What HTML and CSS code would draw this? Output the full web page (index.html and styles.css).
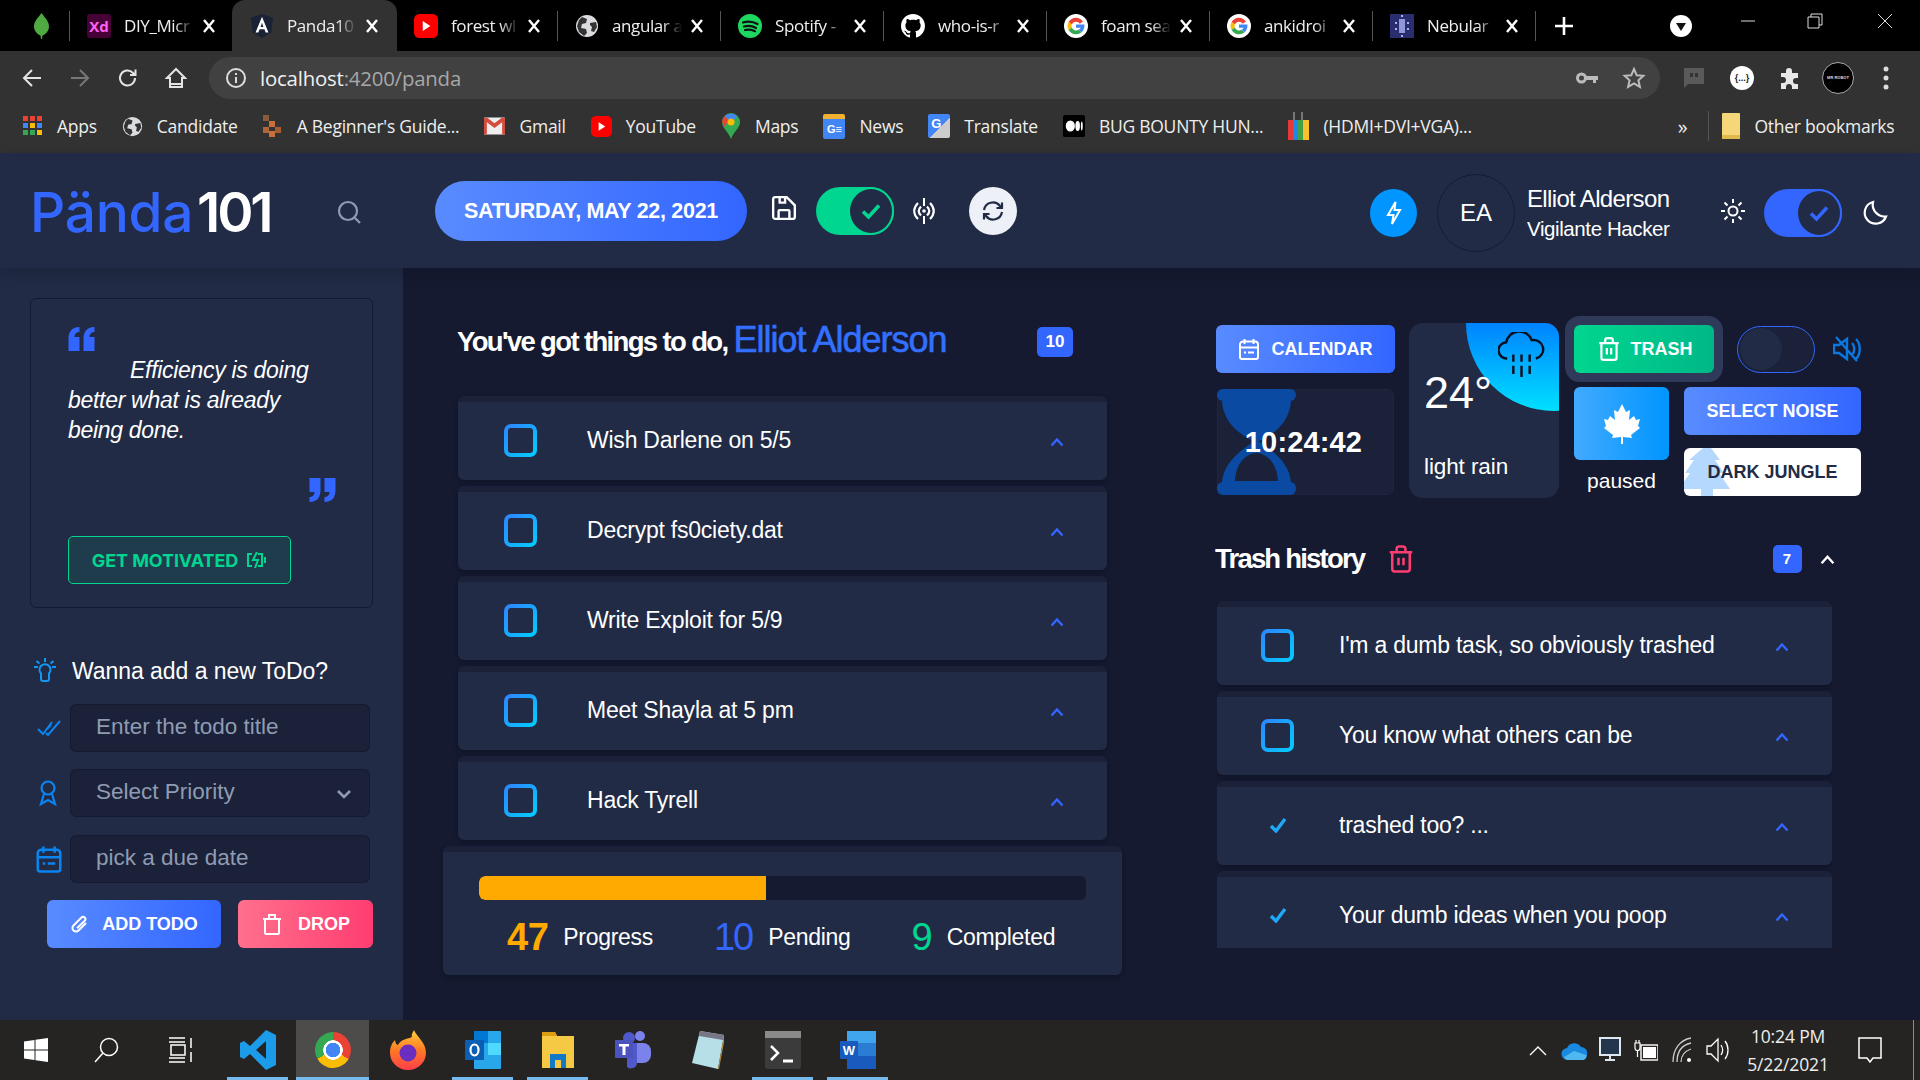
FILE: index.html
```html
<!DOCTYPE html>
<html lang="en">
<head>
<meta charset="utf-8">
<title>Panda101</title>
<link rel="stylesheet" href="styles.css">
</head>
<body>
<svg class="defs" width="0" height="0" aria-hidden="true">
  <symbol id="x" viewBox="0 0 14 14"><path d="M2 1l10 12M12 1L2 13" stroke="#fff" stroke-width="2.4" fill="none"/></symbol>
  <symbol id="g" viewBox="0 0 24 24"><circle cx="12" cy="12" r="12" fill="#fff"/><path d="M19 7.5A8.5 8.5 0 0 0 4.6 8l3.2 2.5A4.6 4.6 0 0 1 15.9 9.8z" fill="#ea4335"/><path d="M4.6 8a8.6 8.6 0 0 0 0 8l3.2-2.5a4.6 4.6 0 0 1 0-3z" fill="#fbbc05"/><path d="M4.6 16a8.5 8.5 0 0 0 13 2.2l-3-2.4a4.6 4.6 0 0 1-6.8-2.3z" fill="#34a853"/><path d="M20.4 10.4H12v3.4h4.7a4 4 0 0 1-2.1 2l3 2.4c2-1.9 3.2-4.7 2.8-7.8z" fill="#4285f4"/></symbol>
  <symbol id="globe" viewBox="0 0 24 24"><circle cx="12" cy="12" r="11" fill="#dadce0"/><path d="M7 3l5 2-1 4-4 1-1 4 5 1 1 4-3 3-5-4-2-6 2-6zM15 9l6-1 1 5-3 5-3-1 1-4-2-2z" fill="#333"/></symbol>
  <symbol id="yt" viewBox="0 0 22 22"><rect width="22" height="22" rx="5" fill="#f00"/><path d="M8 6.5l7 4.5-7 4.5z" fill="#fff"/></symbol>
  <symbol id="chev" viewBox="0 0 14 10"><path d="M1.5 8.5L7 2.5l5.5 6" fill="none" stroke="#3366ff" stroke-width="2.4"/></symbol>
  <symbol id="tick" viewBox="0 0 18 16"><path d="M2 9l5 5L16 2" fill="none" stroke="#1fa8f5" stroke-width="3.4"/></symbol>
  <symbol id="cal" viewBox="0 0 24 24"><path d="M3 7.5A3 3 0 0 1 6 4.5h12a3 3 0 0 1 3 3V20a2 2 0 0 1-2 2H5a2 2 0 0 1-2-2zM3 10.5h18M7.5 2v5M16.500 2v5M7 15.500h2M11 15.500h6" fill="none" stroke="currentColor" stroke-width="2"/></symbol>
  <symbol id="bin" viewBox="0 0 24 24"><path d="M3 6.500h18M5 6.500V20a2 2 0 0 0 2 2h10a2 2 0 0 0 2-2V6.500M8.500 6V4a2 2 0 0 1 2-2h3a2 2 0 0 1 2 2v2M10 11v6M14 11v6" fill="none" stroke="currentColor" stroke-width="2"/></symbol>
  <symbol id="check2" viewBox="0 0 24 24"><path d="M4 12.500l5.500 5.500L20 6.500" fill="none" stroke="currentColor" stroke-width="3.600"/></symbol>
</svg>

<div class="tabstrip">
  <div class="pinned"><svg width="15" height="26" viewBox="0 0 15 26"><path d="M7.500 0C11 5 15 8 15 13.500c0 5-4 8-6.500 9L8 26H7l-.5-3.500C4 21.500 0 18.500 0 13.500 0 8 4 5 7.500 0z" fill="#4faa41"/></svg></div>
  <i class="sep"></i>
  <div class="tab"><span class="fav-xd">Xd</span><span class="tt">DIY_Micr</span><svg class="cl"><use href="#x"/></svg></div>
  <div class="tab active"><svg class="fav" viewBox="0 0 24 26"><path d="M12 0l12 4-2 16-10 6-10-6L0 4z" fill="#1a2235"/><path d="M12 3L5 20h3l1.400-3.500h5.200L16 20h3zM10.500 14L12 9.500 13.500 14z" fill="#fff"/></svg><span class="tt">Panda10</span><svg class="cl"><use href="#x"/></svg></div>
  <div class="tab narrow"><svg class="fav"><use href="#yt"/></svg><span class="tt">forest wl</span><svg class="cl"><use href="#x"/></svg></div>
  <i class="sep"></i>
  <div class="tab"><svg class="fav"><use href="#globe"/></svg><span class="tt">angular a</span><svg class="cl"><use href="#x"/></svg></div>
  <i class="sep"></i>
  <div class="tab"><svg class="fav" viewBox="0 0 24 24"><circle cx="12" cy="12" r="12" fill="#1ed760"/><path d="M5 8.500c5-1.500 10-1 14.500 1.500M6 12.500c4-1 8.500-.7 12 1.500M7 16c3.500-.8 7-.5 10 1.200" fill="none" stroke="#111" stroke-width="2.200" stroke-linecap="round"/></svg><span class="tt">Spotify -</span><svg class="cl"><use href="#x"/></svg></div>
  <i class="sep"></i>
  <div class="tab"><svg class="fav" viewBox="0 0 16 16"><path fill="#fff" d="M8 0C3.580 0 0 3.580 0 8c0 3.540 2.290 6.530 5.470 7.590.4.070.55-.17.55-.38 0-.19-.01-.82-.01-1.490-2.010.37-2.530-.49-2.690-.94-.09-.23-.48-.94-.82-1.130-.28-.15-.68-.52-.01-.53.63-.01 1.080.58 1.230.82.720 1.210 1.870.87 2.330.66.070-.52.280-.87.510-1.070-1.780-.2-3.640-.89-3.640-3.950 0-.87.310-1.590.820-2.150-.08-.2-.36-1.020.080-2.120 0 0 .67-.21 2.200.82.640-.18 1.320-.27 2-.27.68 0 1.360.09 2 .27 1.530-1.040 2.200-.82 2.200-.82.440 1.100.160 1.920.080 2.120.510.560.820 1.270.820 2.150 0 3.070-1.870 3.750-3.650 3.950.290.250.540.730.540 1.480 0 1.070-.01 1.930-.01 2.200 0 .21.150.46.550.38A8.013 8.013 0 0016 8c0-4.420-3.580-8-8-8z"/></svg><span class="tt">who-is-r</span><svg class="cl"><use href="#x"/></svg></div>
  <i class="sep"></i>
  <div class="tab"><svg class="fav"><use href="#g"/></svg><span class="tt">foam sea</span><svg class="cl"><use href="#x"/></svg></div>
  <i class="sep"></i>
  <div class="tab"><svg class="fav"><use href="#g"/></svg><span class="tt">ankidroi</span><svg class="cl"><use href="#x"/></svg></div>
  <i class="sep"></i>
  <div class="tab"><svg class="fav" viewBox="0 0 24 24"><rect width="24" height="24" fill="#2a2d6e"/><g fill="#a9b4f5"><rect x="9" y="5" width="6" height="14" opacity=".8"/><rect x="5" y="8" width="2" height="2"/><rect x="17" y="8" width="2" height="2"/><rect x="5" y="14" width="2" height="2"/><rect x="17" y="14" width="2" height="2"/><rect x="11" y="1" width="2" height="2"/><rect x="11" y="21" width="2" height="2"/></g></svg><span class="tt">Nebular</span><svg class="cl"><use href="#x"/></svg></div>
  <i class="sep"></i>
  <svg class="plus" viewBox="0 0 20 20"><path d="M10 1v18M1 10h18" stroke="#fff" stroke-width="2.600"/></svg>
  <svg class="media" viewBox="0 0 22 22"><circle cx="11" cy="11" r="11" fill="#fff"/><path d="M6 8h10l-5 8z" fill="#111"/></svg>
  <svg class="win-min" viewBox="0 0 14 2"><path d="M0 1h14" stroke="#ddd"/></svg>
  <svg class="win-max" viewBox="0 0 16 16"><path d="M1 4h11v11H1zM4 4V1h11v11h-3" fill="none" stroke="#ddd"/></svg>
  <svg class="win-cl" viewBox="0 0 16 16"><path d="M1 1l14 14M15 1L1 15" stroke="#ddd" fill="none"/></svg>
</div>

<div class="toolbar">
  <div class="tbtn"><svg width="20" height="20" viewBox="0 0 20 20"><path d="M19 10H2M10 2l-8 8 8 8" fill="none" stroke="#e4e4e4" stroke-width="2"/></svg></div>
  <div class="tbtn"><svg width="20" height="20" viewBox="0 0 20 20"><path d="M1 10h17M10 2l8 8-8 8" fill="none" stroke="#777" stroke-width="2"/></svg></div>
  <div class="tbtn"><svg width="22" height="22" viewBox="0 0 22 22"><path d="M18 11a7.500 7.500 0 1 1-2.200-5.300L18 8M18.500 2.500V8H13" fill="none" stroke="#e4e4e4" stroke-width="2"/></svg></div>
  <div class="tbtn"><svg width="22" height="22" viewBox="0 0 22 22"><path d="M11 2L2 11h3v9h12v-9h3zM5 17h12" fill="none" stroke="#e4e4e4" stroke-width="2"/></svg></div>
  <div class="omni">
    <svg width="22" height="22" viewBox="0 0 22 22"><circle cx="11" cy="11" r="9" fill="none" stroke="#ddd" stroke-width="2"/><path d="M11 10v6M11 6v2" stroke="#ddd" stroke-width="2"/></svg>
    <span class="url"><b>localhost</b>:4200/panda</span>
    <svg class="omni-key" width="22" height="14" viewBox="0 0 22 14"><circle cx="5.500" cy="7" r="4" fill="none" stroke="#bbb" stroke-width="3"/><path d="M9 5h13v4h-2v3h-3V9H9z" fill="#bbb"/></svg>
    <svg width="24" height="24" viewBox="0 0 24 24"><path d="M12 3l2.700 6.200 6.700.6-5 4.500 1.500 6.600L12 17.400l-5.900 3.500 1.500-6.600-5-4.500 6.700-.6z" fill="none" stroke="#bbb" stroke-width="2"/></svg>
  </div>
  <div class="tbtn"><svg width="22" height="22" viewBox="0 0 22 22"><path d="M1 1h20v16H5l-4 4z" fill="#5a5a5a"/><path d="M7 6h3v4H7zM12 6h3v4h-3z" fill="#333"/></svg></div>
  <div class="tbtn"><span class="ext-round">{...}</span></div>
  <div class="tbtn"><svg width="24" height="24" viewBox="0 0 24 24"><path d="M3 7h5V5a3 3 0 0 1 6 0v2h6v5h-2a3 3 0 0 0 0 6h2v5h-6v-2a3 3 0 0 0-6 0v2H3v-6h2a3 3 0 0 0 0-6H3z" fill="#e8e8e8"/></svg></div>
  <div class="tbtn"><span class="avatar">MR ROBOT</span></div>
  <div class="tbtn"><svg width="6" height="24" viewBox="0 0 6 24"><circle cx="3" cy="3" r="2.500" fill="#ddd"/><circle cx="3" cy="12" r="2.500" fill="#ddd"/><circle cx="3" cy="21" r="2.500" fill="#ddd"/></svg></div>
</div>

<div class="bookmarks">
  <span class="bm"><svg width="20" height="20" viewBox="0 0 20 20"><g><rect width="5" height="5" fill="#ea4335"/><rect x="7" width="5" height="5" fill="#ea4335"/><rect x="14" width="5" height="5" fill="#ea4335"/><rect y="7" width="5" height="5" fill="#4285f4"/><rect x="7" y="7" width="5" height="5" fill="#fbbc05"/><rect x="14" y="7" width="5" height="5" fill="#4285f4"/><rect y="14" width="5" height="5" fill="#34a853"/><rect x="7" y="14" width="5" height="5" fill="#34a853"/><rect x="14" y="14" width="5" height="5" fill="#fbbc05"/></g></svg>Apps</span>
  <span class="bm"><svg width="21" height="21"><use href="#globe"/></svg>Candidate</span>
  <span class="bm"><svg width="20" height="22" viewBox="0 0 20 22"><rect width="6" height="6" fill="#8a5a3c"/><rect x="6" y="6" width="6" height="6" fill="#c8703c"/><rect x="0" y="12" width="6" height="6" fill="#b0653a"/><rect x="12" y="12" width="6" height="6" fill="#a85a30"/><rect x="6" y="16" width="6" height="6" fill="#c8703c"/></svg>A Beginner's Guide...</span>
  <span class="bm"><svg width="21" height="18" viewBox="0 0 22 18"><rect width="22" height="18" rx="1" fill="#eee"/><path d="M0 1v17h3V5l8 6 8-6v13h3V1l-3-1-8 6-8-6z" fill="#d54c3f"/></svg>Gmail</span>
  <span class="bm"><svg width="21" height="21"><use href="#yt"/></svg>YouTube</span>
  <span class="bm"><svg width="20" height="26" viewBox="-1 0 20 26"><path d="M9 0a9 9 0 0 1 9 9c0 6-6 9-9 17C6 18 0 15 0 9a9 9 0 0 1 9-9z" fill="#34a853"/><path d="M3 3a9 9 0 0 1 12 0l-3 4H6z" fill="#4285f4"/><path d="M0 9a9 9 0 0 1 3-6l3 4-3 7z" fill="#ea4335"/><circle cx="9" cy="9" r="3.500" fill="#fbbc05"/></svg>Maps</span>
  <span class="bm"><span class="news">G≡</span>News</span>
  <span class="bm"><span class="trans">G</span>Translate</span>
  <span class="bm"><svg width="22" height="24" viewBox="0 0 24 24"><rect width="24" height="24" rx="2" fill="#000"/><ellipse cx="8" cy="12" rx="5" ry="6" fill="#fff"/><ellipse cx="16" cy="12" rx="2.500" ry="5.500" fill="#fff"/><ellipse cx="20.500" cy="12" rx="1" ry="5" fill="#fff"/></svg>BUG BOUNTY HUN...</span>
  <span class="bm"><svg width="21" height="28" viewBox="0 0 21 28"><rect y="8" width="5" height="20" fill="#e53935"/><rect x="5" y="8" width="5" height="20" fill="#1e88e5"/><rect x="10" y="8" width="5" height="20" fill="#43a047"/><rect x="15" y="8" width="6" height="20" fill="#fbc02d"/><path d="M6 0v8M14 0v8" stroke="#777" stroke-width="2"/></svg>(HDMI+DVI+VGA)...</span>
  <span class="more">»</span>
  <i class="bm-sep"></i>
  <span class="bm"><svg width="18" height="26" viewBox="0 0 18 26"><rect width="18" height="26" rx="1" fill="#f5d77a"/><rect y="22" width="18" height="4" fill="#e0b94c"/></svg>Other bookmarks</span>
</div>

<div class="app">
  <header class="hdr">
    <div class="logo"><span class="logo-a">Pända</span><span class="logo-b">101</span></div>
    <svg class="hd-search" viewBox="0 0 24 24"><circle cx="11" cy="11" r="9" fill="none" stroke="#8f9bb3" stroke-width="2.200"/><path d="M18 18l5 5" stroke="#8f9bb3" stroke-width="2.200"/></svg>
    <div class="datepill">SATURDAY, MAY 22, 2021</div>
    <svg class="hd-save" viewBox="0 0 24 24"><path d="M2 4a2 2 0 0 1 2-2h10.500L22 9.500V20a2 2 0 0 1-2 2H4a2 2 0 0 1-2-2zM8 2v5h5V2M7 22v-7a1 1 0 0 1 1-1h8a1 1 0 0 1 1 1v7" fill="none" stroke="#fff" stroke-width="2.200"/></svg>
    <div class="switch green"><span class="knob"><svg width="24" height="24" class="kcheck"><use href="#check2"/></svg></span></div>
    <svg class="hd-cast" viewBox="0 0 28 28"><path d="M8 6c-5 5-5 11 0 16M20 6c5 5 5 11 0 16M11 9.500c-3 3-3 6 0 9M17 9.500c3 3 3 6 0 9" fill="none" stroke="#fff" stroke-width="2.200"/><path d="M14 1v8M14 19v8" stroke="#fff" stroke-width="2"/><circle cx="14" cy="14" r="1.800" fill="#fff"/></svg>
    <div class="refresh"><svg width="24" height="24" viewBox="0 0 24 24"><path d="M3 11a9 9 0 0 1 16-4l2 2M21 13a9 9 0 0 1-16 4l-2-2M21 3.500V9h-5.500M3 20.500V15h5.500" fill="none" stroke="#222b45" stroke-width="2.200"/></svg></div>
    <div class="bolt"><svg width="16" height="26" viewBox="0 0 16 26"><path d="M9.500 2L2 15h5.500L6 24l8-14H8.500z" fill="none" stroke="#fff" stroke-width="2"/></svg></div>
    <div class="ava-ea">EA</div>
    <div class="who"><span class="who-n">Elliot Alderson</span><span class="who-r">Vigilante Hacker</span></div>
    <svg class="hd-sun" viewBox="0 0 26 26"><circle cx="13" cy="13" r="4.500" fill="none" stroke="#fff" stroke-width="2"/><path d="M13 1v4M13 21v4M1 13h4M21 13h4M4.500 4.500l3 3M18.500 18.500l3 3M21.500 4.500l-3 3M7.500 18.500l-3 3" stroke="#fff" stroke-width="2"/></svg>
    <div class="switch blue"><span class="knob"><svg width="24" height="24" class="kcheck"><use href="#check2"/></svg></span></div>
    <svg class="hd-moon" viewBox="0 0 26 26"><path d="M11 2a11 11 0 1 0 13 14.500A12 12 0 0 1 11 2z" fill="none" stroke="#fff" stroke-width="2.200"/></svg>
  </header>

  <div class="body">
    <aside class="side">
      <section class="quote">
        <svg class="q-open" viewBox="0 0 26 24"><path d="M0 12C0 5 3 0 11 0v5c-3 0-5 2-5 5h5v14H0zM15 12c0-7 3-12 11-12v5c-3 0-5 2-5 5h5v14H15z" fill="#3366ff"/></svg>
        <p class="q-text">Efficiency is doing better what is already being done.</p>
        <svg class="q-close" viewBox="0 0 26 24"><path d="M26 12c0 7-3 12-11 12v-5c3 0 5-2 5-5h-5V0h11zM11 12c0 7-3 12-11 12v-5c3 0 5-2 5-5H0V0h11z" fill="#3366ff"/></svg>
        <div class="motivate">GET MOTIVATED<svg width="20" height="16" viewBox="0 0 20 16"><path d="M5 2H1v12h4M11 2h4v12h-4M10 0L6 8h5l-3 8M18 5v6" fill="none" stroke="#00d68f" stroke-width="2"/></svg></div>
      </section>

      <h3 class="newtodo"><svg width="26" height="26" viewBox="0 0 26 26"><path d="M13 0v4M2 9h4M20 9h4M4.500 3l3 2.500M21.500 3l-3 2.500M9 21V15.500A5.500 5.500 0 1 1 17 15.500V21a2 2 0 0 1-2 2h-4a2 2 0 0 1-2-2z" fill="none" stroke="#1297f5" stroke-width="2"/></svg>Wanna add a new ToDo?</h3>

      <div class="frow"><svg class="ficon" width="24" height="16" viewBox="0 0 24 16"><path d="M1 9l5 5L15 2M9 13l2 2L23 1M10 9l4-4" fill="none" stroke="#0a84f0" stroke-width="2"/></svg><div class="field">Enter the todo title</div></div>
      <div class="frow f2"><svg class="ficon fmedal" width="18" height="26" viewBox="0 0 18 26"><circle cx="9" cy="8" r="6.500" fill="none" stroke="#0a84f0" stroke-width="2.200"/><path d="M5 14L2 24l7-4 7 4-3-10" fill="none" stroke="#0a84f0" stroke-width="2.200"/></svg><div class="field">Select Priority<svg class="caret" width="16" height="10" viewBox="0 0 16 10"><path d="M2 2l6 6 6-6" fill="none" stroke="#8f9bb3" stroke-width="2.600"/></svg></div></div>
      <div class="frow"><svg class="ficon fcal" width="30" height="30"><use href="#cal"/></svg><div class="field">pick a due date</div></div>

      <div class="fbtns">
        <div class="btn primary addbtn"><svg width="20" height="20" viewBox="0 0 20 20"><path d="M17 9l-7.500 7.500a3.500 3.500 0 0 1-5-5L12.500 3.500a2.200 2.200 0 0 1 3.200 3.200L8 14.300" fill="none" stroke="#fff" stroke-width="2" transform="translate(-1,0)"/></svg>ADD TODO</div>
        <div class="btn danger dropbtn"><svg width="22" height="22" viewBox="0 0 22 22"><path d="M2 6h18M4 6v14a1 1 0 0 0 1 1h12a1 1 0 0 0 1-1V6M8 6V2h6v4" fill="none" stroke="#fff" stroke-width="2"/></svg>DROP</div>
      </div>
    </aside>

    <main class="main">
      <div class="left">
        <div class="greet">
          <h2>You've got things to do, <span>Elliot Alderson</span></h2>
          <b class="badge">10</b>
        </div>
        <div class="todos">
          <div class="item"><i class="box"></i><span class="itx">Wish Darlene on 5/5</span><svg class="cv"><use href="#chev"/></svg></div>
          <div class="item"><i class="box"></i><span class="itx">Decrypt fs0ciety.dat</span><svg class="cv"><use href="#chev"/></svg></div>
          <div class="item"><i class="box"></i><span class="itx">Write Exploit for 5/9</span><svg class="cv"><use href="#chev"/></svg></div>
          <div class="item"><i class="box"></i><span class="itx">Meet Shayla at 5 pm</span><svg class="cv"><use href="#chev"/></svg></div>
          <div class="item"><i class="box"></i><span class="itx">Hack Tyrell</span><svg class="cv"><use href="#chev"/></svg></div>
        </div>
        <section class="progress">
          <div class="bar"><div class="fill"></div></div>
          <div class="stats">
            <b class="n-orange">47</b><span class="lab lab-a">Progress</span>
            <span class="n-blue">10</span><span class="lab lab-b">Pending</span>
            <span class="n-green">9</span><span class="lab lab-c">Completed</span>
          </div>
        </section>
      </div>

      <div class="right">
        <div class="widgets">
          <div class="w1">
            <div class="btn primary calbtn"><svg width="24" height="24"><use href="#cal"/></svg>CALENDAR</div>
            <div class="clock">
              <svg class="hourglass" viewBox="0 0 79 106"><rect width="79" height="12" rx="6" fill="#0b4aa3"/><rect y="93" width="79" height="13" rx="6" fill="#0b4aa3"/><path d="M5 10h69c0 20-14 35-34.500 43C19 45 5 30 5 10z" fill="#0b4aa3"/><path fill-rule="evenodd" d="M5 94c1-18 15-31 34.500-43C59 63 73 76 74 94zM18 92h43c-1-16-9-27-21.500-28C27 65 19 76 18 92z" fill="#0b4aa3"/></svg>
              <b class="time">10:24:42</b>
            </div>
          </div>
          <div class="weather">
            <i class="sunblob"></i>
            <svg class="rain" viewBox="0 0 46 46"><path d="M9 26a8 8 0 0 1-1-16A13 13 0 0 1 33 8a9 9 0 0 1 4 18" fill="none" stroke="#0a1020" stroke-width="2.400"/><path d="M15 22v7M23 22v7M31 22v7M15 33v8M23 33v11M31 33v8" stroke="#0a1020" stroke-width="2.400"/></svg>
            <span class="temp">24°</span>
            <span class="cond">light rain</span>
          </div>
          <div class="w3">
            <div class="w3top">
              <div class="btn success trashbtn"><svg width="26" height="26"><use href="#bin"/></svg>TRASH</div>
              <div class="switch off"><span class="knob"></span></div>
              <svg class="mute" viewBox="0 0 28 26"><path d="M1 9v8h5l8 6V3L6 9zM19 7c3 3 3 9 0 12M23 3c5 5 5 15 0 20M3 1l21 24" fill="none" stroke="#0a78e0" stroke-width="2.400"/></svg>
            </div>
            <div class="w3bot">
              <div class="noise">
                <div class="maple"><svg width="36" height="40" viewBox="0 0 36 40"><path d="M18 0l4 8 4-2-1 10 5-4 2 4 4-1-2 7 2 2-9 7 1 3-9-1v7h-2v-7l-9 1 1-3-9-7 2-2-2-7 4 1 2-4 5 4-1-10 4 2z" fill="#fff"/></svg></div>
                <span class="paused">paused</span>
              </div>
              <div class="sel">
                <div class="btn primary noisebtn">SELECT NOISE</div>
                <div class="jungle"><svg class="tree" viewBox="0 0 46 48"><path d="M19 0h8l9 12h-5l9 13h-5l11 16H29v7H17v-7H-5L6 25H1l9-13H5z" fill="#b5d8ff"/></svg><span>DARK JUNGLE</span></div>
              </div>
            </div>
          </div>
        </div>

        <div class="trash-h">
          <h2>Trash history</h2>
          <svg class="red-bin" width="30" height="30"><use href="#bin"/></svg>
          <b class="badge small">7</b>
          <svg class="cv2" viewBox="0 0 14 10"><path d="M1.500 8.500L7 2.500l5.500 6" fill="none" stroke="#fff" stroke-width="2.200"/></svg>
        </div>
        <div class="trash-list">
          <div class="item t"><i class="box"></i><span class="itx">I'm a dumb task, so obviously trashed</span><svg class="cv"><use href="#chev"/></svg></div>
          <div class="item t"><i class="box"></i><span class="itx">You know what others can be</span><svg class="cv"><use href="#chev"/></svg></div>
          <div class="item t"><span class="tick"><svg width="18" height="16"><use href="#tick"/></svg></span><span class="itx">trashed too? ...</span><svg class="cv"><use href="#chev"/></svg></div>
          <div class="item t"><span class="tick"><svg width="18" height="16"><use href="#tick"/></svg></span><span class="itx">Your dumb ideas when you poop</span><svg class="cv"><use href="#chev"/></svg></div>
        </div>
      </div>
    </main>
  </div>
</div>

<footer class="taskbar">
  <div class="tk tk-w"><svg width="24" height="24" viewBox="0 0 24 24"><path d="M0 3.500L10.500 2v9.500H0zM11.500 1.800L24 0v11.500H11.500zM0 12.500h10.500V22L0 20.500zM11.500 12.500H24V24l-12.500-1.800z" fill="#fff"/></svg></div>
  <div class="tk"><svg width="26" height="26" viewBox="0 0 26 26"><circle cx="16" cy="10" r="8.500" fill="none" stroke="#fff" stroke-width="1.500"/><path d="M10 16l-8 9" stroke="#fff" stroke-width="1.500"/></svg></div>
  <div class="tk tk-v"><svg width="26" height="26" viewBox="0 0 26 26"><path d="M1 1h16M1 5h16M3 8h14v10H3zM1 21h16M1 25h16M23 1v10M23 15v10" fill="none" stroke="#fff" stroke-width="1.500"/></svg></div>
  <div class="tk open"><svg width="36" height="40" viewBox="0 0 36 40"><path d="M26 0l10 5v30l-10 5L10 24l-6 5-4-2V13l4-2 6 5zM26 11l-10 9 10 9z" fill="#1c9ce8" fill-rule="evenodd"/></svg></div>
  <div class="tk open active"><i class="chrome"></i></div>
  <div class="tk"><svg width="36" height="40" viewBox="0 0 36 40"><defs><linearGradient id="ff" x1="0" y1="0" x2="0" y2="1"><stop offset="0" stop-color="#ffcf3a"/><stop offset=".5" stop-color="#ff7a24"/><stop offset="1" stop-color="#ff3d4a"/></linearGradient></defs><path d="M24 0c2 6 12 12 12 23a18 17 0 0 1-36 0c0-6 2-10 5-13 0 3 2 5 3 5 3-6 10-6 14-8-1-2 1-5 2-7z" fill="url(#ff)"/><circle cx="18" cy="23" r="8.500" fill="#6a2ec0"/></svg></div>
  <div class="tk open"><svg width="36" height="38" viewBox="0 0 36 38"><rect x="9" width="27" height="38" rx="1" fill="#28a8ea"/><rect x="9" width="14" height="12" fill="#0078d4"/><rect x="23" y="12" width="13" height="12" fill="#50d9ff"/><rect y="9" width="19" height="20" rx="1" fill="#0a5fb4"/><ellipse cx="9.500" cy="19" rx="4" ry="5.500" fill="none" stroke="#fff" stroke-width="2.200"/></svg></div>
  <div class="tk open"><svg width="32" height="36" viewBox="0 0 32 36"><path d="M0 0h13l2 4h17v32H0z" fill="#f6c945"/><path d="M0 0h13l2 4H0z" fill="#dd9d10"/><path d="M8 36V22h16v14h-5v-8h-6v8z" fill="#1478c8"/></svg></div>
  <div class="tk"><svg width="36" height="38" viewBox="0 0 36 38"><circle cx="25" cy="5" r="5" fill="#7b83eb"/><rect x="12" y="12" width="24" height="20" rx="8" fill="#7b83eb"/><circle cx="14" cy="7" r="6" fill="#5059c9"/><path d="M12 12h10v20a6 6 0 0 1-10 4z" fill="#5059c9"/><rect y="9" width="18" height="18" rx="1" fill="#4b53bc"/><path d="M4 13h10v2.500h-3.500V24h-3v-8.500H4z" fill="#fff"/></svg></div>
  <div class="tk"><svg width="32" height="38" viewBox="0 0 32 38"><path d="M8 0l24 4-6 34L0 32z" fill="#b6dfe8"/><path d="M8 0l24 4-1 5L7 5z" fill="#778"/><path d="M26 38l6-34 1 2-6 32z" fill="#b58d44"/></svg></div>
  <div class="tk open"><svg width="36" height="38" viewBox="0 0 36 38"><rect width="36" height="38" rx="3" fill="#3b3b3b"/><rect width="36" height="7" fill="#8a8a8a"/><path d="M6 15l7 7-7 7" fill="none" stroke="#fff" stroke-width="2.500"/><path d="M18 30h10" stroke="#fff" stroke-width="3"/></svg></div>
  <div class="tk open"><svg width="36" height="38" viewBox="0 0 36 38"><rect x="7" width="29" height="38" rx="1" fill="#2b7cd3"/><rect x="7" width="29" height="12" fill="#41a5ee"/><rect x="7" y="25" width="29" height="13" fill="#185abd"/><rect y="10" width="18" height="18" rx="1" fill="#185abd"/><text x="9" y="24" class="wd">W</text></svg></div>
  <div class="tray">
    <div class="ti"><svg width="18" height="11" viewBox="0 0 18 11"><path d="M1 10l8-8 8 8" fill="none" stroke="#fff" stroke-width="1.400"/></svg></div>
    <div class="ti"><svg width="26" height="20" viewBox="0 0 26 20"><path d="M7 20a6 6 0 0 1-1-12 8 8 0 0 1 14-1 6.500 6.500 0 0 1 0 13z" fill="#1a8ae0"/><path d="M3 17l10-6 12 4c1 3-1 5-4 5H7c-2 0-3-1-4-3z" fill="#4fb8f0"/></svg></div>
    <div class="ti"><svg width="22" height="26" viewBox="0 0 22 26"><rect width="22" height="19" fill="#dfe7ee"/><rect x="2" y="2" width="18" height="15" fill="#23364d"/><path d="M10 19h2v3h4v2H6v-2h4z" fill="#dfe7ee"/></svg></div>
    <div class="ti"><svg width="24" height="22" viewBox="0 0 24 22"><rect x="7" y="6" width="17" height="15" fill="none" stroke="#fff" stroke-width="1.400"/><rect x="9" y="8" width="13" height="11" fill="#fff"/><path d="M2 1v3M5 1v3M1 4h5v5a2.500 2.500 0 0 1-5 0zM3.500 11v7" fill="none" stroke="#fff" stroke-width="1.200"/></svg></div>
    <div class="ti"><svg width="20" height="26" viewBox="0 0 20 26"><path d="M1 25C1 12 8 3 19 1M5 25C5 15 10 8 19 6M9 25c0-6 4-11 10-13" fill="none" stroke="#ccc" stroke-width="1.300"/><circle cx="17" cy="23" r="2" fill="#fff"/></svg></div>
    <div class="ti"><svg width="24" height="26" viewBox="0 0 24 26"><path d="M1 9v8h4l7 7V2L5 9zM15 8c2 3 2 7 0 10M19 4c4 5 4 13 0 18" fill="none" stroke="#fff" stroke-width="1.300"/></svg></div>
    <div class="tclock"><span>10:24 PM</span><span>5/22/2021</span></div>
    <svg class="notif" width="24" height="26" viewBox="0 0 24 26"><path d="M1 1h22v20h-8l-3 4-3-4H1z" fill="none" stroke="#fff" stroke-width="1.500"/></svg>
    <i class="showdesk"></i>
  </div>
</footer>
</body>
</html>
```

FILE: styles.css
```css
* { box-sizing: border-box; }
html, body { margin: 0; padding: 0; }
body { width: 1920px; height: 1080px; overflow: hidden; display: flex; flex-direction: column; background: #151a30; color: #fff; font-family: "Liberation Sans", Arial, sans-serif; }
.defs { position: absolute; }
h2, h3, p { margin: 0; }
i { display: block; font-style: normal; }

/* browser chrome */
.tabstrip { height: 51px; background: #000; display: flex; align-items: center; flex: none; font-family: "Open Sans", sans-serif; }
.pinned { width: 69px; display: flex; justify-content: center; padding-left: 13px; }
.sep { flex: none; width: 1px; height: 30px; background: #555; }
.tab { flex: none; width: 162px; height: 51px; display: flex; align-items: center; padding: 0 16px 0 17px; color: #eee; font-size: 17px; }
.tab.active { width: 165px; padding-left: 18px; padding-right: 18px; background: #323232; border-radius: 13px 13px 0 0; }
.tab.narrow { width: 160px; }
.fav, .fav-xd { flex: none; width: 24px; height: 24px; }
.fav-xd { background: #470137; color: #ff61f6; border-radius: 3px; font-size: 15px; font-weight: 700; text-align: center; line-height: 24px; }
.tt { flex: 1; min-width: 0; margin: 0 8px 0 13px; white-space: nowrap; -webkit-mask-image: linear-gradient(90deg, #000 72%, transparent 100%); mask-image: linear-gradient(90deg, #000 72%, transparent 100%); letter-spacing: -.4px; }
.cl { flex: none; width: 14px; height: 14px; }
.plus { flex: none; width: 20px; height: 20px; margin-left: 18px; }
.media { flex: none; width: 22px; height: 22px; margin-left: 96px; }
.win-min { flex: none; width: 14px; height: 2px; margin: 0 0 10px 49px; }
.win-max { flex: none; width: 16px; height: 16px; margin-left: 52px; margin-bottom: 10px; }
.win-cl { flex: none; width: 16px; height: 16px; margin-left: 54px; margin-bottom: 10px; }

.toolbar { height: 56px; background: #323232; display: flex; align-items: center; padding: 0 0 2px 8px; flex: none; }
.tbtn { flex: none; width: 48px; height: 42px; display: flex; align-items: center; justify-content: center; }
.omni { flex: none; width: 1451px; height: 42px; margin-left: 9px; margin-right: 10px; background: #414141; border-radius: 21px; display: flex; align-items: center; padding: 0 14px 0 16px; }
.url { margin-left: 13px; font: 20.400px "Open Sans", sans-serif; color: #a8a8a8; letter-spacing: -.2px; }
.url b { font-weight: 400; color: #f0f0f0; }
.omni-key { margin-left: auto; margin-right: 24px; }
.ext-round { width: 24px; height: 24px; border-radius: 50%; background: #fff; color: #222; font: 700 9px/24px "Liberation Sans", sans-serif; text-align: center; }
.avatar { width: 32px; height: 32px; border-radius: 50%; background: #000; border: 1px solid #aaa; color: #ddd; font: 700 4px/30px "Liberation Sans", sans-serif; text-align: center; white-space: nowrap; }

.bookmarks { height: 46px; background: #323232; display: flex; align-items: center; padding: 0 0 8px 23px; gap: 25px; flex: none; font: 17.500px "Open Sans", sans-serif; letter-spacing: -.25px; color: #eee; }
.bm { display: flex; align-items: center; gap: 14px; white-space: nowrap; }
.news { width: 22px; height: 25px; background: #4285f4; border-top: 5px solid #f0b030; border-radius: 2px; color: #fff; font: 700 11px/20px "Liberation Sans", sans-serif; text-align: center; letter-spacing: 0; }
.trans { width: 22px; height: 24px; background: linear-gradient(135deg, #4285f4 55%, #ccc 55%); border-radius: 2px; color: #fff; font: 700 13px/20px "Liberation Sans", sans-serif; padding-left: 3px; letter-spacing: 0; }
.more { margin-left: 181px; margin-right: -4px; font-size: 20px; }
.bm-sep { width: 1px; height: 30px; background: #555; margin-right: -12px; }

/* app */
.app { flex: 1; min-height: 0; display: flex; flex-direction: column; background: #151a30; }
.hdr { height: 115px; flex: none; background: #222b45; display: flex; align-items: center; position: relative; z-index: 2; box-shadow: 0 6px 14px rgba(10, 14, 30, .25); padding-left: 30px; }
.logo { width: 307px; font-family: Inter, sans-serif; font-size: 55px; line-height: 60px; margin-top: 2px; white-space: nowrap; letter-spacing: -.3px; }
.logo-a { color: #3366ff; font-weight: 500; margin-right: 4px; }
.logo-b { color: #fff; font-weight: 600; letter-spacing: -3.200px; }
.hd-search { flex: none; width: 24px; height: 24px; margin-top: 2px; margin-right: 74px; }
.datepill { flex: none; width: 312px; height: 60px; margin-top: 1px; border-radius: 30px; background: linear-gradient(90deg, #598bff, #3366ff); font-size: 21.500px; font-weight: 700; line-height: 60px; text-align: center; letter-spacing: -.3px; }
.hd-save { flex: none; width: 26px; height: 26px; margin: -5px 19px 0 24px; }
.switch { flex: none; width: 78px; height: 48px; border-radius: 24px; position: relative; display: flex; align-items: center; justify-content: flex-end; }
.switch.green { background: #00d68f; margin-top: 1px; }
.switch.blue { background: #3366ff; margin-top: 4px; }
.knob { width: 46px; height: 46px; border-radius: 50%; background: #222b45; display: flex; align-items: center; justify-content: center; margin-right: 1px; }
.green .knob { color: #00d68f; border: 2px solid #00d68f; margin-right: 0; width: 46px; height: 48px; }
.blue .knob { color: #3366ff; border: 2px solid #3366ff; margin-right: 0; width: 46px; height: 48px; }
.hd-cast { flex: none; width: 28px; height: 28px; margin: 0 31px 0 16px; }
.refresh { flex: none; width: 48px; height: 48px; margin-top: 1px; border-radius: 50%; background: #edf1f7; display: flex; align-items: center; justify-content: center; }
.bolt { flex: none; width: 47px; height: 48px; margin-left: 353px; margin-top: 4px; border-radius: 50%; background: #0095ff; display: flex; align-items: center; justify-content: center; }
.ava-ea { flex: none; width: 78px; height: 78px; margin-left: 20px; margin-top: 4px; border-radius: 50%; border: 1px solid #151a30; font-size: 24px; line-height: 76px; text-align: center; }
.who { flex: none; width: 184px; margin-left: 12px; margin-top: 5px; display: flex; flex-direction: column; gap: 2px; letter-spacing: -.5px; }
.who-n { font-size: 24px; line-height: 28px; letter-spacing: -.65px; }
.who-r { font-size: 20.500px; line-height: 27px; letter-spacing: -.4px; }
.hd-sun { flex: none; width: 26px; height: 26px; margin-top: 1px; margin-right: 18px; margin-left: 9px; }
.hd-moon { flex: none; width: 26px; height: 26px; margin-left: 20px; margin-top: 5px; }

.body { flex: 1; min-height: 0; display: flex; }
.side { flex: none; width: 403px; background: #222b45; padding: 30px 0 0 30px; }
.quote { width: 343px; height: 310px; background: #222b45; border: 1px solid #151a30; border-radius: 6px; padding: 28px 37px 0; position: relative; }
.q-open { display: block; width: 27px; height: 24px; }
.q-text { font-size: 23px; line-height: 30px; font-style: italic; margin-top: 4px; text-indent: 62px; letter-spacing: -.3px; width: 250px; }
.q-close { position: absolute; right: 36px; top: 179px; width: 27px; height: 24px; }
.motivate { position: absolute; left: 37px; top: 237px; width: 223px; height: 48px; border: 1px solid #00d68f; border-radius: 5px; background: rgba(0, 214, 143, .1); display: flex; align-items: center; justify-content: center; gap: 9px; color: #00d68f; font-size: 18px; font-weight: 700; font-family: Inter, sans-serif; letter-spacing: -.1px; }

.newtodo { display: flex; align-items: center; gap: 14px; margin: 49px 0 0 2px; font-size: 23px; font-weight: 400; line-height: 28px; height: 28px; letter-spacing: -.05px; }
.frow { display: flex; align-items: center; width: 340px; margin-top: 18px; }
.newtodo + .frow { margin-top: 19px; }
.frow.f2 { margin-top: 17px; }
.ficon { flex: none; display: block; margin: 0 9px 0 7px; color: #0a84f0; }
.fmedal { margin: 0 13px 0 9px; }
.fcal { margin: 0 6px 0 4px; }
.field { flex: none; width: 300px; height: 48px; background: #1a2138; border: 1px solid #151a30; border-radius: 6px; padding-left: 25px; color: #8f9bb3; font-size: 22.500px; line-height: 44px; display: flex; justify-content: space-between; }
.caret { margin: 19px 17px 0 0; }
.fbtns { display: flex; gap: 17px; margin: 17px 0 0 17px; }
.btn { height: 48px; border-radius: 6px; display: flex; align-items: center; justify-content: center; font-weight: 700; font-family: "Liberation Sans", sans-serif; font-size: 18px; color: #fff; }
.primary { background: linear-gradient(90deg, #598bff, #3366ff); }
.danger { background: linear-gradient(90deg, #ff708d, #ff3d71); }
.success { background: linear-gradient(90deg, #00d68f, #00b887); }
.addbtn { width: 174px; gap: 12px; }
.dropbtn { width: 135px; gap: 15px; }

.main { flex: 1; min-width: 0; display: flex; background: #151a30; }
.left { flex: none; width: 719px; padding: 43px 0 0 40px; }
.greet { height: 60px; display: flex; align-items: center; padding-left: 14px; margin-bottom: 25px; }
.greet h2 { font-size: 27.500px; line-height: 40px; font-weight: 700; letter-spacing: -1.650px; white-space: nowrap; }
.greet h2 span { color: #3370ff; font-size: 36px; font-weight: 400; letter-spacing: -1px; -webkit-text-stroke: .6px #3370ff; vertical-align: -1px; }
.badge { display: block; width: 36px; height: 30px; margin-left: auto; margin-right: 49px; margin-top: 1px; background: #3366ff; border-radius: 5px; text-align: center; font-size: 17px; line-height: 30px; }
.todos { margin-left: 15px; width: 649px; display: flex; flex-direction: column; gap: 6px; }
.item { flex: none; height: 84px; background: #222b45; border-top: 6px solid #1a2138; border-radius: 6px; display: flex; align-items: center; padding: 0 43px 2px 46px; box-shadow: 0 2px 4px rgba(8, 10, 24, .35); }
.box { flex: none; width: 33px; height: 33px; border: 4px solid transparent; border-radius: 7px; background: linear-gradient(#222b45, #222b45) padding-box, linear-gradient(135deg, #3082ff, #00cfff) border-box; }
.itx { margin-left: 50px; font-size: 23px; letter-spacing: -.23px; white-space: nowrap; }
.cv { flex: none; width: 14px; height: 10px; margin-left: auto; margin-top: 3px; }

.progress { width: 679px; height: 129px; margin-top: 6px; background: #222b45; border-top: 6px solid #1a2138; border-radius: 6px; padding: 24px 36px 0; box-shadow: 0 2px 4px rgba(8, 10, 24, .35); }
.bar { height: 24px; background: #151a30; border-radius: 6px; overflow: hidden; }
.fill { width: 47.200%; height: 100%; background: #ffaa00; border-radius: 6px 0 0 6px; }
.stats { display: flex; align-items: center; margin-top: 12px; padding-left: 28px; line-height: 50px; }
.stats b, .stats span:not(.lab) { font-size: 38px; }
.n-orange { color: #ffaa00; letter-spacing: -.5px; }
.n-blue { color: #3366ff; letter-spacing: -2px; }
.n-green { color: #00d68f; }
.lab { font-size: 23px; margin-left: 16px; letter-spacing: -.3px; color: #fff; }
.lab-a { margin-right: 61px; margin-left: 15px; }
.lab-b { margin-right: 61px; }
.lab-c { margin-left: 14px; }

.right { flex: none; width: 798px; padding: 55px 0 0 94px; }
.widgets { display: flex; height: 175px; }
.w1 { flex: none; width: 179px; margin-top: 2px; display: flex; flex-direction: column; gap: 16px; }
.calbtn { gap: 11px; padding-right: 2px; }
.clock { height: 106px; margin: 0 1px; background: #1a2138; border: 1px solid #1f2740; border-radius: 7px; position: relative; display: flex; align-items: center; justify-content: center; padding-right: 4px; }
.hourglass { position: absolute; left: -1px; top: -1px; width: 79px; height: 106px; }
.time { position: relative; font-size: 29px; letter-spacing: .15px; }
.weather { flex: none; width: 150px; height: 175px; margin-left: 14px; background: #222b45; border-radius: 14px; position: relative; overflow: hidden; padding: 44px 0 0 15px; display: flex; flex-direction: column; }
.sunblob { position: absolute; left: 57px; top: -88px; width: 176px; height: 176px; border-radius: 50%; background: linear-gradient(180deg, #0070ff 40%, #00e0ff 100%); }
.rain { position: absolute; left: 89px; top: 9px; width: 47px; height: 47px; }
.temp { position: relative; font-size: 45px; line-height: 52px; }
.cond { position: relative; font-size: 22.500px; line-height: 28px; margin-top: 34px; letter-spacing: -.1px; }
.w3 { flex: none; width: 287px; margin-left: 15px; margin-top: 2px; }
.w3top { display: flex; align-items: center; }
.trashbtn { flex: none; width: 140px; gap: 9px; box-shadow: 0 0 0 9px #2f3a5a; }
.switch.off { background: #1a2138; border: 1px solid #3366ff; justify-content: flex-start; margin-left: 23px; height: 47px; }
.off .knob { width: 42px; height: 42px; background: #222b45; margin: 0 0 0 2px; }
.mute { flex: none; width: 28px; height: 26px; margin-left: 18px; }
.w3bot { display: flex; margin-top: 14px; gap: 15px; }
.noise { flex: none; width: 95px; display: flex; flex-direction: column; align-items: center; }
.maple { width: 95px; height: 73px; border-radius: 6px; background: linear-gradient(90deg, #42aaff, #0095ff); display: flex; align-items: center; justify-content: center; }
.paused { font-size: 21px; line-height: 26px; margin-top: 8px; }
.sel { flex: none; width: 177px; display: flex; flex-direction: column; gap: 13px; }
.jungle { height: 48px; background: #fff; border-radius: 6px; position: relative; overflow: hidden; color: #222b45; font-weight: 700; font-size: 18px; text-align: center; line-height: 48px; }
.jungle span { position: relative; }
.tree { position: absolute; left: 0; top: 0; width: 46px; height: 48px; }
.trash-h { height: 40px; margin-top: 41px; width: 618.500px; display: flex; align-items: center; }
.trash-h h2 { font-size: 27.500px; letter-spacing: -1.800px; font-weight: 700; white-space: nowrap; margin-left: -1px; }
.red-bin { color: #ff3d71; margin-left: 22px; flex: none; }
.badge.small { width: 29px; height: 28px; margin-left: auto; margin-right: 18px; margin-top: 0; font-size: 15px; line-height: 28px; }
.cv2 { flex: none; width: 15px; height: 11px; }
.trash-list { width: 615px; height: 347px; margin: 22px 0 0 1px; overflow: hidden; display: flex; flex-direction: column; gap: 6px; }
.item.t { padding-left: 44px; }
.item.t .itx { margin-left: 45px; }
.tick { flex: none; width: 33px; display: flex; justify-content: center; }

/* taskbar */
.taskbar { height: 60px; flex: none; background: #252423; display: flex; font-family: "Open Sans", sans-serif; }
.tk { flex: none; width: 61px; height: 60px; margin: 0 7px; border-bottom: 3px solid transparent; display: flex; align-items: center; justify-content: center; padding-top: 2px; }
.tk-w { margin: 0; width: 68px; padding-left: 4px; }
.tk-v { margin-right: 9px; }
.tk.open { border-bottom-color: #76b9ed; }
.tk.active { width: 73px; margin: 0 1px; background: #4d4c4b; }
.chrome { width: 36px; height: 36px; border-radius: 50%; background: radial-gradient(circle, #4285f4 0 7px, #fff 7.500px 9.500px, transparent 10px), conic-gradient(from 30deg, #ea4335 0 120deg, #fbbc05 120deg 240deg, #34a853 240deg); transform: rotate(-30deg); }
.wd { fill: #fff; font: 700 13px "Liberation Sans", sans-serif; text-anchor: middle; }
.tray { margin-left: auto; display: flex; align-items: center; width: 400px; }
.ti { flex: none; width: 36px; display: flex; justify-content: center; }
.tclock { flex: none; width: 104px; display: flex; flex-direction: column; align-items: center; font-size: 17.500px; line-height: 28px; color: #eee; letter-spacing: -.15px; }
.notif { flex: none; margin-left: 18px; }
.showdesk { flex: none; width: 1px; height: 60px; background: #8a8a8a; margin-left: 31px; }
```
